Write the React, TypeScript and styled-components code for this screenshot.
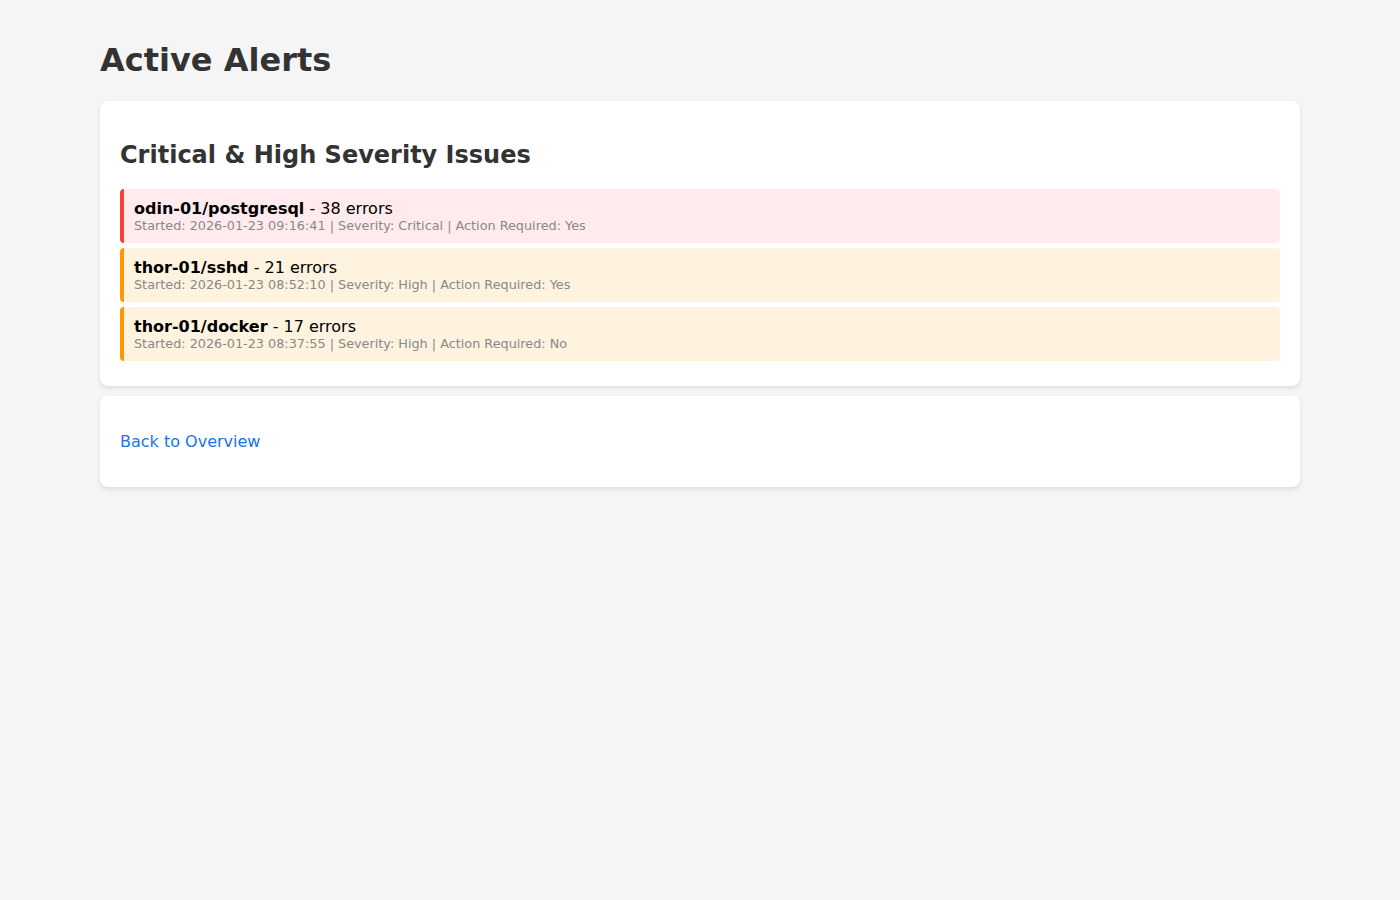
import styled, { createGlobalStyle } from 'styled-components'

const GlobalStyle = createGlobalStyle`
  body {
    margin: 0;
    padding: 20px;
    background: #f5f5f5;
    font-family: "DejaVu Sans", sans-serif;
    color: #333;
  }
`

const Container = styled.div`
  max-width: 1200px;
  margin: 0 auto;
`

const Title = styled.h1`
  font-size: 32px;
  font-weight: 700;
  color: #333;
  margin: 21.44px 0;
`

const Card = styled.div`
  background: #ffffff;
  border-radius: 8px;
  padding: 20px;
  margin-bottom: 10px;
  box-shadow: 0 2px 4px rgba(0, 0, 0, 0.1);
`

const CardTitle = styled.h2`
  font-size: 24px;
  font-weight: 700;
  color: #333;
  margin: 19.92px 0;
`

const Alert = styled.div<{ $level: 'critical' | 'high' }>`
  padding: 10px;
  margin: 5px 0;
  border-radius: 4px;
  border-left: 4px solid ${({ $level }) => ($level === 'critical' ? '#f44336' : '#ff9800')};
  background: ${({ $level }) => ($level === 'critical' ? '#ffebee' : '#fff3e0')};
  color: #000;
  font-size: 16px;
`

const Meta = styled.div`
  font-size: 0.8em;
  color: #888;
`

const LinkLine = styled.p`
  margin: 16px 0;
  font-size: 16px;
`

const Link = styled.a`
  color: #1a73e8;
  text-decoration: none;
`

type AlertItem = {
  source: string
  errors: number
  started: string
  severity: 'Critical' | 'High'
  action: 'Yes' | 'No'
}

const alerts: AlertItem[] = [
  { source: 'odin-01/postgresql', errors: 38, started: '2026-01-23 09:16:41', severity: 'Critical', action: 'Yes' },
  { source: 'thor-01/sshd', errors: 21, started: '2026-01-23 08:52:10', severity: 'High', action: 'Yes' },
  { source: 'thor-01/docker', errors: 17, started: '2026-01-23 08:37:55', severity: 'High', action: 'No' },
]

export default function App() {
  return (
    <>
      <GlobalStyle />
      <Container>
        <Title>Active Alerts</Title>

        <Card>
          <CardTitle>Critical &amp; High Severity Issues</CardTitle>
          {alerts.map((a) => (
            <Alert key={a.source} $level={a.severity === 'Critical' ? 'critical' : 'high'}>
              <strong>{a.source}</strong> - {a.errors} errors
              <Meta>
                Started: {a.started} | Severity: {a.severity} | Action Required: {a.action}
              </Meta>
            </Alert>
          ))}
        </Card>

        <Card>
          <LinkLine>
            <Link href="#">Back to Overview</Link>
          </LinkLine>
        </Card>
      </Container>
    </>
  )
}
